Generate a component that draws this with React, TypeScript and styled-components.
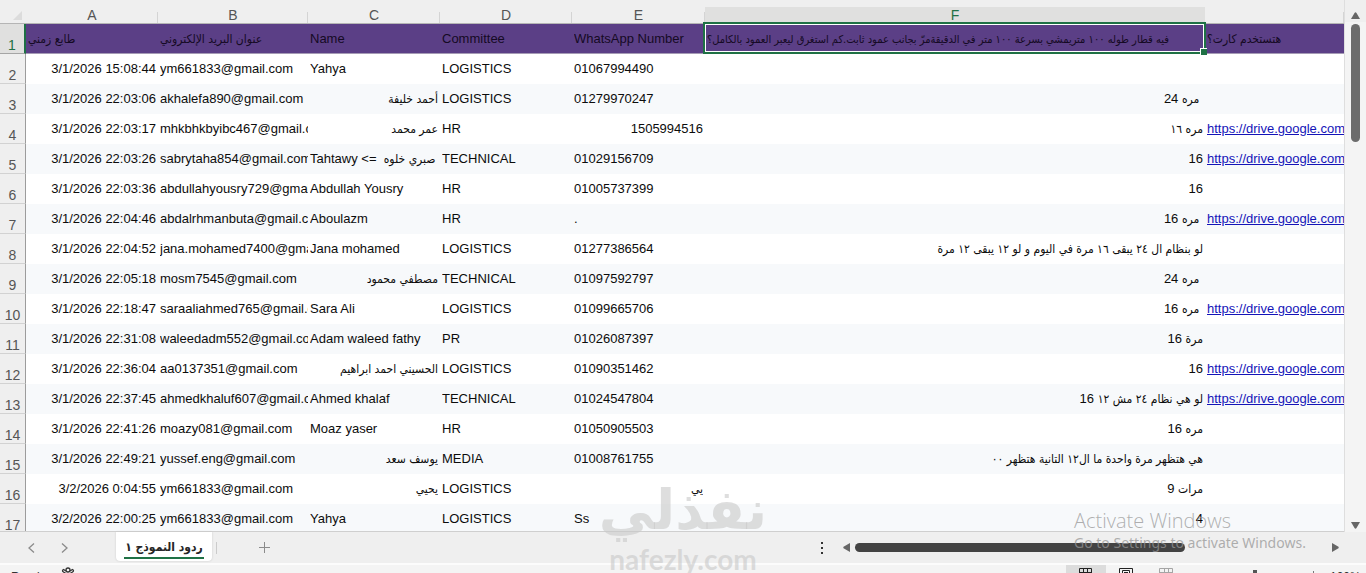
import React from "react";
import styled, { createGlobalStyle, css } from "styled-components";

const GlobalStyle = createGlobalStyle`
  * { box-sizing: border-box; }
  body { margin: 0; background: #efefef; font-family: "Liberation Sans", Arial, sans-serif; }
  button { font: inherit; margin: 0; padding: 0; border: 0; background: none; color: inherit; display: block; }
`;

const green = "#1f7145";

const Window = styled.div`
  height: 100vh;
  display: flex;
  flex-direction: column;
  overflow: hidden;
  position: relative;
`;

const Workspace = styled.main`
  flex: 1;
  min-height: 0;
  display: flex;
`;

const SheetView = styled.div`
  flex: 1;
  min-width: 0;
  overflow: hidden;
  border-bottom: 1px solid #cfcfcf;
`;

const Grid = styled.table`
  width: 100%;
  table-layout: fixed;
  border-collapse: separate;
  border-spacing: 0;
  font-size: 13px;
  line-height: 16px;
  color: #0c0c0c;
`;

const Corner = styled.td`
  padding: 0;
  vertical-align: bottom;
  border-bottom: 1px solid #b5b5b5;
  svg { display: block; margin: 0 4px 3px auto; }
`;

const ColumnHead = styled.th<{ $active?: boolean }>`
  height: 24px;
  padding: 7px 0 0;
  font-size: 14px;
  font-weight: 400;
  line-height: 16px;
  color: ${(p) => (p.$active ? green : "#555")};
  border-bottom: 1px solid #b5b5b5;
  background: ${(p) =>
    p.$active
      ? "linear-gradient(#efefef 7px, #e0e0df 7px)"
      : "linear-gradient(#d4d4d4, #d4d4d4) right bottom / 1px 11px no-repeat #efefef"};
`;

const RowHead = styled.th<{ $active?: boolean }>`
  height: 30px;
  padding: 0;
  font-size: 14px;
  font-weight: 400;
  line-height: 16px;
  vertical-align: bottom;
  color: ${(p) => (p.$active ? green : "#555")};
  background: ${(p) => (p.$active ? "#e0e0df" : "#efefef")};
  border-right: ${(p) => (p.$active ? `2px solid ${green}` : "1px solid #9c9c9c")};
  border-bottom: 1px solid ${(p) => (p.$active ? "#a5a5a5" : "#d2d2d2")};
`;

const Row = styled.tr<{ $tone: "title" | "plain" | "tint" }>`
  background: ${(p) => ({ title: "#5b3f86", plain: "#ffffff", tint: "#f7f9fb" })[p.$tone]};
  ${(p) =>
    p.$tone === "title" &&
    css`
      color: #150a24;
      td { border-bottom: 1px solid #a59bb5; }
    `}
`;

const Cell = styled.td<{ $end?: boolean }>`
  position: relative;
  padding: 0 ${(p) => (p.$end ? "2px" : "0")} 0 2px;
  text-align: ${(p) => (p.$end ? "right" : "left")};
`;

const CellText = styled.div`
  overflow: hidden;
  white-space: pre;
  height: 16px;
`;

const Arabic = styled.span<{ $small?: boolean }>`
  font-family: "DejaVu Sans Condensed", "DejaVu Sans", sans-serif;
  font-size: ${(p) => (p.$small ? 11 : 12)}px;
  line-height: 16px;
`;

const Selection = styled.div`
  position: absolute;
  inset: -2px -1px -1px -2px;
  border: 2px solid ${green};
  box-shadow: inset 0 0 0 1px #fff;
  z-index: 1;
  &::after {
    content: "";
    position: absolute;
    right: -3px;
    bottom: -3px;
    width: 6px;
    height: 6px;
    background: ${green};
    border: 1px solid #fff;
    border-width: 1px 0 0 1px;
  }
`;

const Link = styled.a`
  color: #1414b8;
  text-decoration: underline;
`;

const VerticalScroll = styled.div`
  width: 22px;
  flex: none;
  display: flex;
  flex-direction: column;
  align-items: center;
  gap: 5px;
  padding: 12px 0 3px;
  border-left: 1px solid #dedede;
  background: linear-gradient(#efefef 22px, #f4f4f4 22px);
`;

const VerticalTrack = styled.div`
  flex: 1;
  width: 9px;
`;

const VerticalThumb = styled.div`
  height: 24%;
  border-radius: 5px;
  background: #6c6c6c;
`;

const TabBar = styled.nav`
  flex: none;
  height: 31px;
  display: flex;
  align-items: center;
  background: #efefef;
  color: #8b8b8b;
`;

const TabArrows = styled.div`
  width: 116px;
  display: flex;
  gap: 22px;
  padding-left: 27px;
`;

const SheetTab = styled.button`
  && {
    align-self: flex-start;
    height: 29px;
    padding: 3px 8px 0;
    background: #fff;
    border-radius: 0 0 4px 4px;
    box-shadow: 0 0 2px #c4c4c4;
    color: #262626;
  }
`;

const TabLabel = styled.span`
  display: block;
  min-width: 80px;
  height: 22px;
  border-bottom: 2px solid ${green};
  font: 700 12px/20px "DejaVu Sans Condensed", "DejaVu Sans", sans-serif;
  white-space: nowrap;
`;

const AddSheet = styled.div`
  margin-left: 4px;
  padding-left: 42px;
  border-left: 1px solid #cbcbcb;
  flex: 1;
`;

const HorizontalScroll = styled.div`
  flex: 0 0 523px;
  display: flex;
  align-items: center;
  gap: 5px;
  padding-right: 27px;
`;

const HorizontalTrack = styled.div`
  flex: 1;
  height: 9px;
`;

const HorizontalThumb = styled.div`
  width: 70%;
  height: 9px;
  border-radius: 5px;
  background: #434343;
`;

const More = styled.button`
  && { margin-right: 15px; }
`;

const StatusBar = styled.footer`
  flex: none;
  height: 10px;
  overflow: hidden;
  display: flex;
  align-items: flex-start;
  border-top: 2px solid #fcfcfc;
  background: #f4f4f4;
  font-size: 12px;
  line-height: 14px;
  color: #333;
`;

const StatusText = styled.span<{ $width: number }>`
  padding-top: 5px;
  width: ${(p) => p.$width}px;
`;

const StatusLeft = styled.div`
  flex: 1;
  display: flex;
  padding-left: 11px;
`;

const ViewButton = styled.button<{ $tone: "active" | "idle" | "faint" }>`
  && {
    width: 40px;
    height: 20px;
    padding: 3px 13px 0;
    color: ${(p) => (p.$tone === "faint" ? "#a5a5a5" : "#222")};
    background: ${(p) => (p.$tone === "active" ? "#dcdcdc" : "transparent")};
  }
`;

const ZoomBar = styled.div`
  width: 144px;
  height: 20px;
  padding-top: 5px;
`;

const Watermark = styled.div`
  position: absolute;
  left: 50%;
  bottom: -1px;
  width: 170px;
  margin-left: -85px;
  z-index: 3;
  text-align: center;
  color: rgba(200, 200, 200, 0.6);
  pointer-events: none;
`;

const WatermarkArabic = styled.div`
  font: 700 55px/60px "DejaVu Sans", sans-serif;
  height: 64px;
`;

const WatermarkLatin = styled.div`
  font: 700 28px/30px "Lato", sans-serif;
`;

const Activate = styled.div`
  position: absolute;
  right: 56px;
  bottom: 20px;
  width: 236px;
  z-index: 3;
  color: rgba(150, 150, 150, 0.75);
  font-family: "Noto Sans", "Open Sans", sans-serif;
  white-space: nowrap;
  pointer-events: none;
`;

const ActivateTitle = styled.div`
  font-family: "Open Sans", sans-serif;
  font-size: 20px;
  line-height: 24px;
  font-weight: 300;
`;

const ActivateNote = styled.div`
  font-size: 14px;
  line-height: 20px;
`;

type Dir = "up" | "down" | "left" | "right";
const trianglePaths: Record<Dir, string> = {
  up: "M3.500 1 Q4.500 -0.500 5.500 1 L9 7 H0 Z",
  down: "M0 0 H9 L5.500 6 Q4.500 7.500 3.500 6 Z",
  left: "M7 0 V9 L0.500 5.200 Q0 4.500 0.500 3.800 Z",
  right: "M0 0 V9 L6.500 5.200 Q7 4.500 6.500 3.800 Z",
};

function ScrollArrow({ dir }: { dir: Dir }) {
  const tall = dir === "left" || dir === "right";
  return (
    <button aria-label={`Scroll ${dir}`}>
      <svg width={tall ? 7 : 9} height={tall ? 9 : 7} display="block">
        <path d={trianglePaths[dir]} fill="#666" />
      </svg>
    </button>
  );
}

function Chevron({ next }: { next?: boolean }) {
  return (
    <button aria-label={next ? "Next sheet" : "Previous sheet"}>
      <svg width="10" height="10" fill="none" stroke="currentColor" strokeWidth="1.300" display="block">
        <path d={next ? "M3 0.500 L8 5 L3 9.500" : "M7 0.500 L2 5 L7 9.500"} />
      </svg>
    </button>
  );
}

const arabicRun = /([\u0600-\u06FF]+(?:[ .]+[\u0600-\u06FF]+)*)/;

function Mixed({ text, small }: { text: string; small?: boolean }) {
  return (
    <>
      {text.split(arabicRun).map((part, i) =>
        i % 2 ? (
          <Arabic key={i} $small={small}>{part}</Arabic>
        ) : (
          <React.Fragment key={i}>{part}</React.Fragment>
        )
      )}
    </>
  );
}

const columns = ["A", "B", "C", "D", "E", "F", ""];
const widths = [132, 150, 132, 132, 133, 500];

const titles = [
  "طابع زمني",
  "عنوان البريد الإلكتروني",
  "Name",
  "Committee",
  "WhatsApp Number",
  "فيه قطار طوله ١٠٠ متريمشي بسرعة ١٠٠ متر في الدقيقةمرّ بجانب عمود ثابت.كم استغرق ليعبر العمود بالكامل؟",
  "هتستخدم كارت؟",
];

type Entry = [string, string, string, string, string, string, boolean];
const entries: Entry[] = [
  ["3/1/2026 15:08:44", "ym661833@gmail.com", "Yahya", "LOGISTICS", "01067994490", "", false],
  ["3/1/2026 22:03:06", "akhalefa890@gmail.com", "أحمد خليفة", "LOGISTICS", "01279970247", " مره 24", false],
  ["3/1/2026 22:03:17", "mhkbhkbyibc467@gmail.com", "عمر محمد", "HR", "1505994516", "مره ١٦", true],
  ["3/1/2026 22:03:26", "sabrytaha854@gmail.com", "Tahtawy <=  صبري خلوه", "TECHNICAL", "01029156709", "16", true],
  ["3/1/2026 22:03:36", "abdullahyousry729@gmail.com", "Abdullah Yousry", "HR", "01005737399", "16", false],
  ["3/1/2026 22:04:46", "abdalrhmanbuta@gmail.com", "Aboulazm", "HR", ".", " مره 16", true],
  ["3/1/2026 22:04:52", "jana.mohamed7400@gmail.com", "Jana mohamed", "LOGISTICS", "01277386564", "لو بنظام ال ٢٤ يبقى ١٦ مرة في اليوم و لو ١٢ يبقى ١٢ مرة", false],
  ["3/1/2026 22:05:18", "mosm7545@gmail.com", "مصطفي محمود", "TECHNICAL", "01097592797", " مره 24", false],
  ["3/1/2026 22:18:47", "saraaliahmed765@gmail.com", "Sara Ali", "LOGISTICS", "01099665706", " مره 16", true],
  ["3/1/2026 22:31:08", "waleedadm552@gmail.com", "Adam waleed fathy", "PR", "01026087397", "مرة 16", false],
  ["3/1/2026 22:36:04", "aa0137351@gmail.com", "الحسيني احمد ابراهيم", "LOGISTICS", "01090351462", "16", true],
  ["3/1/2026 22:37:45", "ahmedkhaluf607@gmail.com", "Ahmed khalaf", "TECHNICAL", "01024547804", "لو هي نظام ٢٤ مش ١٢ 16", true],
  ["3/1/2026 22:41:26", "moazy081@gmail.com", "Moaz yaser", "HR", "01050905503", "مره 16", false],
  ["3/1/2026 22:49:21", "yussef.eng@gmail.com", "يوسف سعد", "MEDIA", "01008761755", "هي هتظهر مرة واحدة ما ال١٢ التانية هتظهر ٠٠", false],
  ["3/2/2026 0:04:55", "ym661833@gmail.com", "يحيي", "LOGISTICS", "يي", "مرات 9", false],
  ["3/2/2026 22:00:25", "ym661833@gmail.com", "Yahya", "LOGISTICS", "Ss", "4", false],
];

const startsArabic = (s: string) => /^\s*[\u0600-\u06FF]/.test(s);

const TitleText = styled(CellText)`
  text-align: left;
`;

export default function App() {
  return (
    <Window>
      <GlobalStyle />
      <Workspace>
        <SheetView>
          <Grid>
            <colgroup>
              <col width={26} />
              {widths.map((w, i) => (
                <col key={i} width={w} />
              ))}
              <col />
            </colgroup>
            <thead>
              <tr>
                <Corner>
                  <svg width="9" height="9"><path d="M9 0 V9 H0 Z" fill="#dcdcdc" /></svg>
                </Corner>
                {columns.map((c) => (
                  <ColumnHead key={c} scope="col" $active={c === "F"}>{c}</ColumnHead>
                ))}
              </tr>
            </thead>
            <tbody>
              <Row $tone="title">
                <RowHead scope="row" $active>1</RowHead>
                {titles.map((t, i) => (
                  <Cell key={i}>
                    <TitleText dir={startsArabic(t) ? "rtl" : "ltr"}>
                      <Mixed text={t} small={i === 5} />
                    </TitleText>
                    {i === 5 && <Selection />}
                  </Cell>
                ))}
              </Row>
              {entries.map((entry, r) => (
                <Row key={r} $tone={r % 2 ? "tint" : "plain"}>
                  <RowHead scope="row">{r + 2}</RowHead>
                  {entry.slice(0, 6).map((value, i) => {
                    const text = value as string;
                    const rtl = startsArabic(text);
                    return (
                      <Cell key={i} $end={rtl || i === 0 || i === 5 || text === "1505994516"}>
                        <CellText dir={rtl ? "rtl" : "ltr"}>
                          <Mixed text={text} />
                        </CellText>
                      </Cell>
                    );
                  })}
                  <Cell>
                    {entry[6] && (
                      <CellText>
                        <Link href="https://drive.google.com">https://drive.google.com</Link>
                      </CellText>
                    )}
                  </Cell>
                </Row>
              ))}
            </tbody>
          </Grid>
        </SheetView>
        <VerticalScroll>
          <ScrollArrow dir="up" />
          <VerticalTrack><VerticalThumb /></VerticalTrack>
          <ScrollArrow dir="down" />
        </VerticalScroll>
      </Workspace>
      <TabBar>
        <TabArrows>
          <Chevron />
          <Chevron next />
        </TabArrows>
        <SheetTab><TabLabel dir="rtl">ردود النموذج ١</TabLabel></SheetTab>
        <AddSheet>
          <button aria-label="New sheet">
            <svg width="12" height="12" stroke="currentColor" display="block">
              <path d="M5.500 0 V11 M0 5.500 H11" />
            </svg>
          </button>
        </AddSheet>
        <More aria-label="Tab options">
          <svg width="12" height="12" fill="#333" display="block">
            <path d="M5 0h2v2h-2z M5 5h2v2h-2z M5 10h2v2h-2z" />
          </svg>
        </More>
        <HorizontalScroll>
          <ScrollArrow dir="left" />
          <HorizontalTrack><HorizontalThumb /></HorizontalTrack>
          <ScrollArrow dir="right" />
        </HorizontalScroll>
      </TabBar>
      <StatusBar>
        <StatusLeft>
          <StatusText $width={50}>Ready</StatusText>
          <svg width="14" height="14" fill="none" stroke="#333" strokeWidth="1.300">
            <circle cx="7" cy="5" r="2" />
            <path d="M5 6 L2.500 4.500 Q0.500 5.500 2.500 7 L5 8.500 M9 6 L11.500 4.500 Q13.500 5.500 11.500 7 L9 8.500" />
          </svg>
        </StatusLeft>
        <ViewButton $tone="active" aria-label="Normal view">
          <svg width="14" height="14" fill="none" stroke="currentColor">
            <path d="M0.500 0.500 H12.500 V12.500 H0.500 Z M4.500 0 V13 M8.500 0 V13 M0 4.500 H13 M0 8.500 H13" />
          </svg>
        </ViewButton>
        <ViewButton $tone="idle" aria-label="Page layout">
          <svg width="14" height="14" fill="none" stroke="currentColor">
            <path d="M0.500 0.500 H13.500 V13 H0.500 Z M3.500 2.500 H10.500 V13 M3.500 2.500 V13 M5 4.500 H9" />
          </svg>
        </ViewButton>
        <ViewButton $tone="faint" aria-label="Page break preview">
          <svg width="14" height="14" fill="none" stroke="currentColor">
            <path d="M0.500 0.500 H13.500 V13 H0.500 Z M5.500 0 V4.500 M9.500 0 V13 M0 4.500 H14" />
          </svg>
        </ViewButton>
        <ZoomBar>
          <svg width="136" height="12">
            <path d="M67 0 H71 V12 H67 Z" fill="#555" />
            <path d="M127.500 1 V9 M123 5.500 H132" stroke="#777" />
          </svg>
        </ZoomBar>
        <StatusText $width={36}>100%</StatusText>
      </StatusBar>
      <Watermark>
        <WatermarkArabic dir="rtl">نفذلي</WatermarkArabic>
        <WatermarkLatin>nafezly.com</WatermarkLatin>
      </Watermark>
      <Activate>
        <ActivateTitle>Activate Windows</ActivateTitle>
        <ActivateNote>Go to Settings to activate Windows.</ActivateNote>
      </Activate>
    </Window>
  );
}
